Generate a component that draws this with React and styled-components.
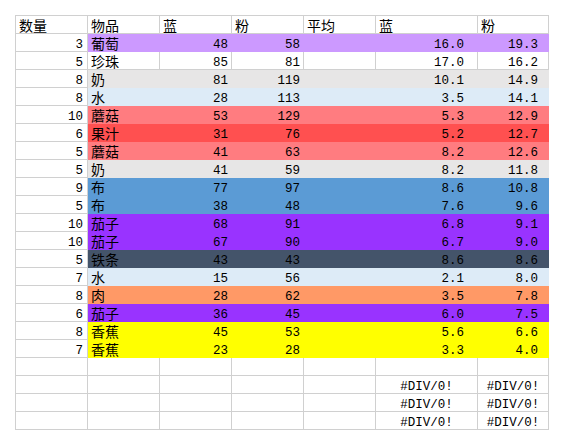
import React from 'react';
import styled, { createGlobalStyle } from 'styled-components';

const GlobalStyle = createGlobalStyle`
  html, body {
    margin: 0;
    padding: 0;
    background: #ffffff;
  }
`;

const fills = {
  lavender: '#cc99ff',
  gray: '#e7e6e6',
  ice: '#ddebf7',
  salmon: '#ff7c80',
  red: '#ff5050',
  blue: '#5b9bd5',
  purple: '#9933ff',
  slate: '#44546a',
  orange: '#ff9966',
  yellow: '#ffff00'
};

const rows = [
  [3, '葡萄', 48, 58, '16.0', '19.3', 'lavender'],
  [5, '珍珠', 85, 81, '17.0', '16.2', null],
  [8, '奶', 81, 119, '10.1', '14.9', 'gray'],
  [8, '水', 28, 113, '3.5', '14.1', 'ice'],
  [10, '蘑菇', 53, 129, '5.3', '12.9', 'salmon'],
  [6, '果汁', 31, 76, '5.2', '12.7', 'red'],
  [5, '蘑菇', 41, 63, '8.2', '12.6', 'salmon'],
  [5, '奶', 41, 59, '8.2', '11.8', 'gray'],
  [9, '布', 77, 97, '8.6', '10.8', 'blue'],
  [5, '布', 38, 48, '7.6', '9.6', 'blue'],
  [10, '茄子', 68, 91, '6.8', '9.1', 'purple'],
  [10, '茄子', 67, 90, '6.7', '9.0', 'purple'],
  [5, '铁条', 43, 43, '8.6', '8.6', 'slate'],
  [7, '水', 15, 56, '2.1', '8.0', 'ice'],
  [8, '肉', 28, 62, '3.5', '7.8', 'orange'],
  [6, '茄子', 36, 45, '6.0', '7.5', 'purple'],
  [8, '香蕉', 45, 53, '5.6', '6.6', 'yellow'],
  [7, '香蕉', 23, 28, '3.3', '4.0', 'yellow']
];

const headers = ['数量', '物品', '蓝', '粉', '平均', '蓝', '粉'];

const Page = styled.div`
  padding: 15px;
`;

const Sheet = styled.div`
  display: grid;
  grid-template-columns: 72px 72px 72px 72px 72px 102px 71px;
  grid-template-rows: repeat(23, 18px);
  width: max-content;
  border-top: 1px solid #d0d0d0;
  border-left: 1px solid #d0d0d0;
`;

const Cell = styled.div`
  box-sizing: border-box;
  height: 18px;
  padding: 0 ${(p) => p.$padR ?? 3}px 0 3px;
  text-align: ${(p) => p.$align || 'left'};
  background: ${(p) => (p.$fill ? fills[p.$fill] : '#ffffff')};
  border-right: 1px solid ${(p) => (p.$fill ? fills[p.$fill] : '#d0d0d0')};
  border-bottom: 1px solid ${(p) => (p.$fill ? fills[p.$fill] : '#d0d0d0')};
  color: #000000;
  white-space: nowrap;
  line-height: 16px;
  font-size: 12px;
`;

const Label = styled.span`
  display: inline-block;
  font-family: "Noto Sans CJK SC", "Noto Sans CJK JP", sans-serif;
  font-size: 14px;
  line-height: 16px;
  height: 16px;
  vertical-align: top;
  margin-top: 1px;
`;

const Num = styled.span`
  display: inline-block;
  font-family: "Liberation Mono", "Courier New", monospace;
  font-size: 12.5px;
  line-height: 12px;
  height: 12px;
  vertical-align: top;
  margin-top: 5px;
`;

export default function App() {
  return (
    <>
      <GlobalStyle />
      <Page lang="zh-CN">
        <Sheet>
          {headers.map((h, i) => (
            <Cell key={'h' + i}>
              <Label>{h}</Label>
            </Cell>
          ))}
          {rows.map((r, i) => (
            <React.Fragment key={i}>
              <Cell $align="right" $padR={4}>
                <Num>{r[0]}</Num>
              </Cell>
              <Cell $fill={r[6]}>
                <Label>{r[1]}</Label>
              </Cell>
              <Cell $fill={r[6]} $align="right" $padR={3}>
                <Num>{r[2]}</Num>
              </Cell>
              <Cell $fill={r[6]} $align="right" $padR={3}>
                <Num>{r[3]}</Num>
              </Cell>
              <Cell $fill={r[6]} />
              <Cell $fill={r[6]} $align="right" $padR={13}>
                <Num>{r[4]}</Num>
              </Cell>
              <Cell $fill={r[6]} $align="right" $padR={10}>
                <Num>{r[5]}</Num>
              </Cell>
            </React.Fragment>
          ))}
          {[0, 1, 2, 3].map((k) => (
            <React.Fragment key={'e' + k}>
              <Cell />
              <Cell />
              <Cell />
              <Cell />
              <Cell />
              <Cell $align="center">{k > 0 && <Num>#DIV/0!</Num>}</Cell>
              <Cell $align="center">{k > 0 && <Num>#DIV/0!</Num>}</Cell>
            </React.Fragment>
          ))}
        </Sheet>
      </Page>
    </>
  );
}
